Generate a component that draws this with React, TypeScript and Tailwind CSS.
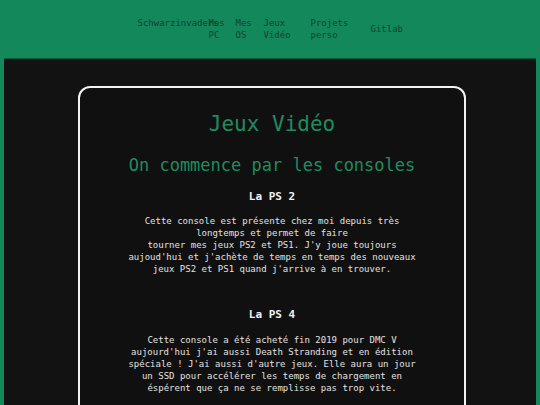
import React from 'react';

const navItems = [
  { label: 'Mes PC', width: 'w-[27px]' },
  { label: 'Mes OS', width: 'w-[28px]' },
  { label: 'Jeux Vidéo', width: 'w-[47px]' },
  { label: 'Projets perso', width: 'w-[60px]' },
  { label: 'Gitlab', width: 'w-[40px]' },
];

const App: React.FC = () => {
  return (
    <div
      className="min-h-screen bg-[#12885b] px-[4px]"
      style={{ fontFamily: '"DejaVu Sans Mono", "Liberation Mono", monospace' }}
    >
      {/* Header */}
      <header className="flex h-[58px] items-center justify-center">
        <nav className="flex h-[24px] items-center pl-[8px] text-[9px] leading-[12px] text-[#173f2d]">
          <div className="w-[71px] self-start whitespace-nowrap">Schwarzinvaders</div>
          {navItems.map(item => (
            <div key={item.label} className={item.width}>
              {item.label}
            </div>
          ))}
        </nav>
      </header>

      {/* Main */}
      <main className="min-h-[347px] border-t border-[#0d5a3c] bg-[#131213] pl-[74px] pr-[70px] pt-[27px] pb-10">
        <div className="rounded-[12px] border-2 border-[#f2f2f2] bg-[#111011] px-4 pt-[22px] pb-10 text-center">
          <h1 className="text-[21px] leading-[28px] text-[#1f8c5f]">Jeux Vidéo</h1>
          <h2 className="mt-[15px] text-[17px] leading-[24px] text-[#1f8c5f]">
            On commence par les consoles
          </h2>

          <h3 className="mt-[12px] text-[11px] font-bold leading-[16px] text-[#f0f0f0]">La PS 2</h3>
          <p className="mx-auto mt-[10px] max-w-[296px] text-[9px] leading-[12px] text-[#e2e2e2]">
            Cette console est présente chez moi depuis très longtemps et permet de faire
            <br />
            tourner mes jeux PS2 et PS1. J'y joue toujours aujoud'hui et j'achète de temps en
            temps des nouveaux jeux PS2 et PS1 quand j'arrive à en trouver.
          </p>

          <h3 className="mt-[32px] text-[11px] font-bold leading-[16px] text-[#f0f0f0]">La PS 4</h3>
          <p className="mx-auto mt-[11px] max-w-[296px] text-[9px] leading-[12px] text-[#e2e2e2]">
            Cette console a été acheté fin 2019 pour DMC V aujourd'hui j'ai aussi Death
            Stranding et en édition spéciale ! J'ai aussi d'autre jeux. Elle aura un jour un SSD
            pour accélérer les temps de chargement en éspérent que ça ne se remplisse pas trop
            vite.
          </p>
        </div>
      </main>
    </div>
  );
};

export default App;
